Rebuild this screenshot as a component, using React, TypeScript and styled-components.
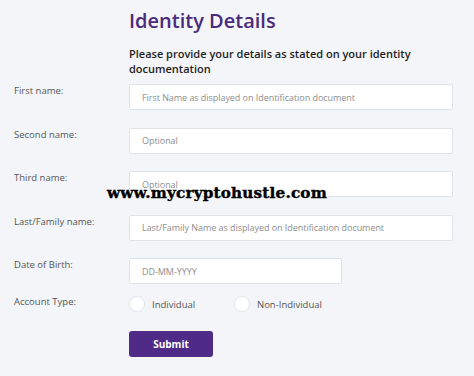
import React from "react";
import styled, { createGlobalStyle } from "styled-components";

const Global = createGlobalStyle`
  html, body { margin: 0; padding: 0; background: #f3f5f8; }
  body { font-family: "Open Sans", "Noto Sans", Arial, sans-serif; }
  * { box-sizing: border-box; }
`;

const Page = styled.div`
  width: 474px;
  height: 376px;
  background: #f3f5f8;
  position: relative;
  overflow: hidden;
`;

const Header = styled.div`
  padding: 6px 0 0 129px;
`;

const Title = styled.h1`
  margin: 0;
  font-size: 20px;
  line-height: 30px;
  font-weight: 600;
  color: #4b2a7b;
`;

const Subtitle = styled.p`
  margin: 10px 0 0;
  font-size: 11px;
  line-height: 15px;
  font-weight: 600;
  color: #1f1f1f;
  width: 300px;
`;

const Form = styled.div`
  margin-top: 8px;
  display: flex;
  flex-direction: column;
`;

const Row = styled.div<{ $after: number }>`
  display: flex;
  align-items: flex-start;
  margin-bottom: ${(p) => p.$after}px;
`;

const Label = styled.div<{ $top?: number }>`
  width: 129px;
  padding: ${(p) => p.$top ?? 1}px 0 0 14px;
  font-size: 9.5px;
  line-height: 12px;
  color: #555;
`;

const Input = styled.div<{ $w?: number }>`
  width: ${(p) => p.$w ?? 324}px;
  height: 26px;
  background: #fff;
  border: 1px solid #dfe2e7;
  border-radius: 2px;
  padding-left: 12px;
  display: flex;
  align-items: center;
  font-size: 9px;
  letter-spacing: -0.05px;
  color: #8e8e8e;
`;

const RadioRow = styled.div`
  display: flex;
  align-items: center;
  height: 20px;
`;

const RadioItem = styled.label<{ $w: number }>`
  display: flex;
  align-items: center;
  gap: 7px;
  width: ${(p) => p.$w}px;
  font-size: 9.5px;
  color: #555;
`;

const Circle = styled.span`
  width: 16px;
  height: 16px;
  border-radius: 50%;
  background: #fff;
  border: 1px solid #e2e5ea;
`;

const Button = styled.button`
  margin-left: 129px;
  width: 84px;
  height: 26px;
  border: none;
  border-radius: 3px;
  background: #4f2a86;
  color: #fff;
  font-family: "Open Sans", Arial, sans-serif;
  font-weight: 700;
  font-size: 10px;
`;

const Watermark = styled.div`
  position: absolute;
  left: 107px;
  top: 184px;
  font-family: "DejaVu Serif", serif;
  font-weight: 900;
  font-size: 15.2px;
  letter-spacing: 0.2px;
  color: #000;
  -webkit-text-stroke: 0.4px #000;
`;

export default function App() {
  return (
    <Page>
      <Global />
      <Header>
        <Title>Identity Details</Title>
        <Subtitle>Please provide your details as stated on your identity documentation</Subtitle>
      </Header>
      <Form>
        <Row $after={17.5}>
          <Label>First name:</Label>
          <Input>First Name as displayed on Identification document</Input>
        </Row>
        <Row $after={17.5}>
          <Label>Second name:</Label>
          <Input>Optional</Input>
        </Row>
        <Row $after={17.5}>
          <Label>Third name:</Label>
          <Input>Optional</Input>
        </Row>
        <Row $after={17.5}>
          <Label>Last/Family name:</Label>
          <Input>Last/Family Name as displayed on Identification document</Input>
        </Row>
        <Row $after={10}>
          <Label>Date of Birth:</Label>
          <Input $w={213}>DD-MM-YYYY</Input>
        </Row>
        <Row $after={17}>
          <Label $top={2}>Account Type:</Label>
          <RadioRow>
            <RadioItem $w={105}>
              <Circle />
              Individual
            </RadioItem>
            <RadioItem $w={120}>
              <Circle />
              Non-Individual
            </RadioItem>
          </RadioRow>
        </Row>
        <Button>Submit</Button>
      </Form>
      <Watermark>www.mycryptohustle.com</Watermark>
    </Page>
  );
}
